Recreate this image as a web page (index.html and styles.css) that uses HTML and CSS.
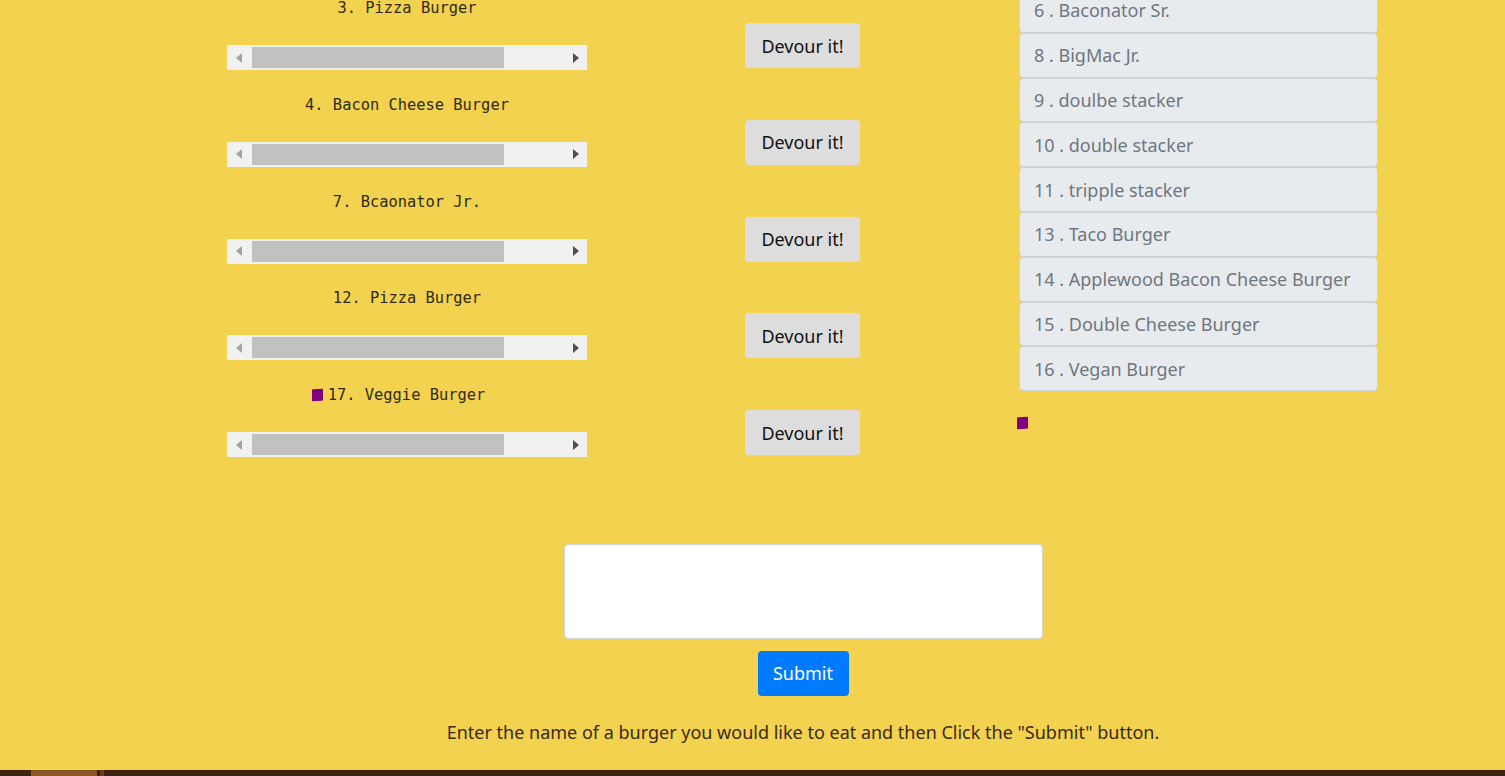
FILE: index.html
```html
<!DOCTYPE html>
<html>
<head>
<meta charset="utf-8">
<title>Eat-Da-Burger</title>
<link rel="stylesheet" href="styles.css">
</head>
<body>
<div class="page">
  <div class="main">
    <div class="burgers">
      <div class="row">
        <div class="item">
          <div class="label">3. Pizza Burger</div>
          <div class="hscroll"><span class="arr arr-l"></span><span class="thumb"></span><span class="arr arr-r"></span></div>
        </div>
        <button class="devour">Devour it!</button>
      </div>
      <div class="row">
        <div class="item">
          <div class="label">4. Bacon Cheese Burger</div>
          <div class="hscroll"><span class="arr arr-l"></span><span class="thumb"></span><span class="arr arr-r"></span></div>
        </div>
        <button class="devour">Devour it!</button>
      </div>
      <div class="row">
        <div class="item">
          <div class="label">7. Bcaonator Jr.</div>
          <div class="hscroll"><span class="arr arr-l"></span><span class="thumb"></span><span class="arr arr-r"></span></div>
        </div>
        <button class="devour">Devour it!</button>
      </div>
      <div class="row">
        <div class="item">
          <div class="label">12. Pizza Burger</div>
          <div class="hscroll"><span class="arr arr-l"></span><span class="thumb"></span><span class="arr arr-r"></span></div>
        </div>
        <button class="devour">Devour it!</button>
      </div>
      <div class="row">
        <div class="item">
          <div class="label label-img"><span class="pix"></span>17. Veggie Burger</div>
          <div class="hscroll"><span class="arr arr-l"></span><span class="thumb"></span><span class="arr arr-r"></span></div>
        </div>
        <button class="devour">Devour it!</button>
      </div>
    </div>
    <div class="eaten">
      <ul class="list">
        <li>6 . Baconator Sr.</li>
        <li>8 . BigMac Jr.</li>
        <li>9 . doulbe stacker</li>
        <li>10 . double stacker</li>
        <li>11 . tripple stacker</li>
        <li>13 . Taco Burger</li>
        <li>14 . Applewood Bacon Cheese Burger</li>
        <li>15 . Double Cheese Burger</li>
        <li>16 . Vegan Burger</li>
      </ul>
      <span class="pix pix-list"></span>
    </div>
  </div>
  <form class="add">
    <textarea class="name"></textarea>
    <button type="button" class="submit">Submit</button>
    <p class="hint">Enter the name of a burger you would like to eat and then Click the "Submit" button.</p>
  </form>
</div>
<div class="footer"><span class="f1"></span><span class="f2"></span><span class="f3"></span></div>
</body>
</html>
```
FILE: styles.css
```css
html, body {
  margin: 0;
  padding: 0;
  height: 100%;
}
body {
  background: #f2d24f;
  font-family: "Noto Sans", "Open Sans", sans-serif;
  overflow: hidden;
  display: flex;
  flex-direction: column;
}
.page {
  flex: 1;
  margin-top: -12px;
}
.main {
  display: flex;
  padding-left: 227px;
  align-items: flex-start;
}
.burgers {
  display: flex;
  flex-direction: column;
  padding-top: 9px;
}
.row {
  display: flex;
  align-items: flex-start;
  height: 96.8px;
}
.item {
  width: 360px;
}
.label {
  font-family: "DejaVu Sans Mono", "Liberation Mono", monospace;
  font-size: 15.4px;
  line-height: 20px;
  height: 20px;
  padding-top: 1px;
  margin-bottom: -1px;
  color: #2f2a1c;
  text-align: center;
  display: flex;
  justify-content: center;
  align-items: center;
}
.label-img {
  padding-right: 17px;
}
.pix {
  display: inline-block;
  width: 11px;
  height: 12px;
  background: #80007f;
  border-radius: 1px;
  transform: skewY(-4deg);
}
.label .pix {
  margin-right: 5px;
}
.hscroll {
  margin-top: 28px;
  height: 25px;
  background: #f1f1f1;
  display: flex;
  align-items: center;
  padding: 0 8px 0 9px;
  box-sizing: border-box;
}
.arr {
  width: 0;
  height: 0;
  border-top: 5px solid transparent;
  border-bottom: 5px solid transparent;
}
.arr-l {
  border-right: 6px solid #a3a3a3;
}
.arr-r {
  border-left: 6px solid #505050;
  margin-left: auto;
}
.thumb {
  margin-left: 10px;
  width: 252px;
  height: 21px;
  background: #c1c1c1;
}
.devour {
  margin-left: 158px;
  margin-top: 26px;
  width: 115px;
  height: 45px;
  background: #dddddd;
  border: none;
  border-radius: 4px;
  font-family: "Noto Sans", "Open Sans", sans-serif;
  font-size: 18px;
  color: #111;
  padding: 0;
}
.eaten {
  margin-left: 159px;
  display: flex;
  flex-direction: column;
}
.list {
  list-style: none;
  margin: 0;
  padding: 0;
  width: 359px;
}
.list li {
  box-sizing: border-box;
  height: 44.8px;
  background: #e8ebee;
  border: 1px solid #cfd3d8;
  border-radius: 4px;
  color: #6f7780;
  font-size: 18px;
  padding: 0 13px 0 14px;
  display: flex;
  align-items: center;
}
.pix-list {
  margin-top: 26px;
  margin-left: -2px;
}
.add {
  display: flex;
  flex-direction: column;
  align-items: center;
  margin-top: 63px;
  padding-left: 101px;
}
.name {
  box-sizing: border-box;
  width: 479px;
  height: 95px;
  background: #fff;
  border: 1px solid #ced4da;
  border-radius: 4px;
  resize: none;
}
.submit {
  margin-top: 12px;
  width: 91px;
  height: 45px;
  background: #007bff;
  color: #fff;
  border: none;
  border-radius: 4px;
  font-family: "Noto Sans", "Open Sans", sans-serif;
  font-size: 18px;
  padding: 0;
}
.hint {
  margin: 23px 0 0;
  font-size: 18px;
  color: #3b2a1e;
  line-height: 26px;
}
.footer {
  height: 6px;
  background: #3d2314;
  display: flex;
  flex-shrink: 0;
}
.f1 {
  margin-left: 31px;
  width: 66px;
  background: #8a5424;
}
.f2 {
  margin-left: 3px;
  width: 4px;
  background: #6e3d1a;
}
```
